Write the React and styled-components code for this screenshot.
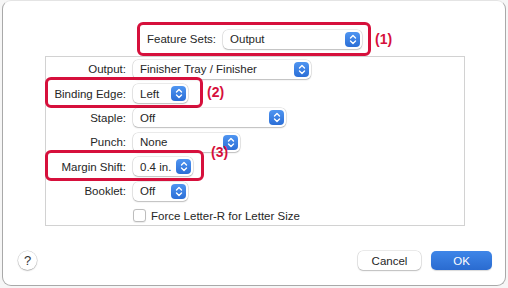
import React from "react";
import styled, { createGlobalStyle } from "styled-components";

const GlobalStyle = createGlobalStyle`
  html, body {
    margin: 0;
    padding: 0;
    background: #f6f6f6;
  }
  body {
    font-family: "Liberation Sans", Arial, sans-serif;
    font-size: 11.5px;
    color: #262626;
  }
`;

const RED = "#d6103c";

const Window = styled.div`
  box-sizing: border-box;
  width: 504px;
  height: 286px;
  margin-left: 2px;
  background: #fff;
  border: 1px solid #a9a9a9;
  border-top-color: #e4e4e4;
  border-radius: 9px;
  display: flex;
  flex-direction: column;
`;

const FeatureBar = styled.div`
  display: flex;
  align-items: center;
  margin: 21px 0 0 134px;
`;

const MarkBox = styled.div`
  box-sizing: border-box;
  display: flex;
  align-items: center;
  gap: 7px;
  height: 34px;
  padding: 0 6px 0 7px;
  border: 3px solid ${RED};
  border-radius: 6px;
`;

const Num = styled.span`
  color: ${RED};
  font-weight: bold;
  font-size: 14px;
  margin-left: 4px;
`;

const Panel = styled.div`
  box-sizing: border-box;
  margin-left: 42px;
  width: 420px;
  height: 170px;
  border: 1px solid #d2d2d2;
  display: grid;
  grid-auto-rows: 24.4px;
  align-content: start;
`;

const Row = styled.div`
  position: relative;
  display: grid;
  grid-template-columns: 80px auto;
  column-gap: 7px;
  align-items: center;
  justify-content: start;

  ${(p) =>
    p.$mark &&
    `
    &::before {
      content: "";
      position: absolute;
      left: -1px;
      top: -4.5px;
      width: ${p.$mark}px;
      height: 31px;
      box-sizing: border-box;
      border: 3px solid ${RED};
      border-radius: 6px;
      pointer-events: none;
    }
  `}
`;

const RowNum = styled.span`
  position: absolute;
  left: ${(p) => p.$left}px;
  top: ${(p) => p.$top}px;
  color: ${RED};
  font-weight: bold;
  font-size: 14px;
`;

const Label = styled.span`
  text-align: right;
  white-space: nowrap;
`;

const PopupBox = styled.div`
  box-sizing: border-box;
  display: flex;
  align-items: center;
  justify-content: space-between;
  width: ${(p) => p.$w}px;
  height: 19px;
  padding: 0 2px 0 7px;
  background: #fff;
  border-radius: 5px;
  box-shadow: 0 0 0 0.5px rgba(0, 0, 0, 0.16), 0 1px 1.5px rgba(0, 0, 0, 0.2);
  white-space: nowrap;
`;

const Arrow = styled.span`
  display: flex;
  align-items: center;
  justify-content: center;
  width: 15px;
  height: 15px;
  border-radius: 4px;
  background: linear-gradient(#4f95f1, #2b6ed6);
`;

const Popup = ({ w, children }) => (
  <PopupBox $w={w}>
    <span>{children}</span>
    <Arrow>
      <svg width="8" height="11" viewBox="0 0 8 11">
        <path
          d="M1.5 4 L4 1.5 L6.5 4 M1.5 7 L4 9.5 L6.5 7"
          fill="none"
          stroke="#fff"
          strokeWidth="1.4"
          strokeLinecap="round"
          strokeLinejoin="round"
        />
      </svg>
    </Arrow>
  </PopupBox>
);

const CheckLine = styled.label`
  grid-column: 2;
  display: flex;
  align-items: center;
  gap: 5px;
`;

const Check = styled.span`
  box-sizing: border-box;
  width: 13px;
  height: 13px;
  border: 1px solid #bdbdbd;
  border-radius: 3px;
  background: #fff;
  box-shadow: 0 0.5px 1px rgba(0, 0, 0, 0.08);
`;

const Footer = styled.div`
  display: flex;
  align-items: center;
  margin-top: 25px;
  padding: 0 13px 0 15px;
`;

const Help = styled.span`
  box-sizing: border-box;
  display: flex;
  align-items: center;
  justify-content: center;
  width: 19px;
  height: 19px;
  border-radius: 50%;
  background: #fff;
  box-shadow: 0 0 0 0.5px rgba(0, 0, 0, 0.18), 0 1px 1.5px rgba(0, 0, 0, 0.2);
  font-size: 13px;
  color: #333;
`;

const Spacer = styled.span`
  flex: 1;
`;

const Button = styled.button`
  box-sizing: border-box;
  width: ${(p) => p.$w}px;
  height: 19px;
  margin-left: 10px;
  border: none;
  border-radius: 5px;
  font-family: inherit;
  font-size: 11.5px;
  padding: 0;
  color: ${(p) => (p.$primary ? "#fff" : "#262626")};
  background: ${(p) =>
    p.$primary ? "linear-gradient(#3f86e8, #2a6bd0)" : "#fff"};
  box-shadow: ${(p) =>
    p.$primary
      ? "0 1px 1px rgba(0,0,0,0.15)"
      : "0 0 0 0.5px rgba(0,0,0,0.16), 0 1px 1.5px rgba(0,0,0,0.2)"};
`;

export default function App() {
  return (
    <>
      <GlobalStyle />
      <Window>
        <FeatureBar>
          <MarkBox>
            <Label>Feature Sets:</Label>
            <Popup w={139}>Output</Popup>
          </MarkBox>
          <Num>(1)</Num>
        </FeatureBar>

        <Panel>
          <Row>
            <Label>Output:</Label>
            <Popup w={178}>Finisher Tray / Finisher</Popup>
          </Row>
          <Row $mark={158}>
            <Label>Binding Edge:</Label>
            <Popup w={55}>Left</Popup>
            <RowNum $left={161} $top={3}>(2)</RowNum>
          </Row>
          <Row>
            <Label>Staple:</Label>
            <Popup w={153}>Off</Popup>
          </Row>
          <Row>
            <Label>Punch:</Label>
            <Popup w={107}>None</Popup>
          </Row>
          <Row $mark={159}>
            <Label>Margin Shift:</Label>
            <Popup w={60}>0.4 in.</Popup>
            <RowNum $left={165} $top={-11}>(3)</RowNum>
          </Row>
          <Row>
            <Label>Booklet:</Label>
            <Popup w={55}>Off</Popup>
          </Row>
          <Row>
            <CheckLine>
              <Check />
              Force Letter-R for Letter Size
            </CheckLine>
          </Row>
        </Panel>

        <Footer>
          <Help>?</Help>
          <Spacer />
          <Button $w={63}>Cancel</Button>
          <Button $w={61} $primary>
            OK
          </Button>
        </Footer>
      </Window>
    </>
  );
}
